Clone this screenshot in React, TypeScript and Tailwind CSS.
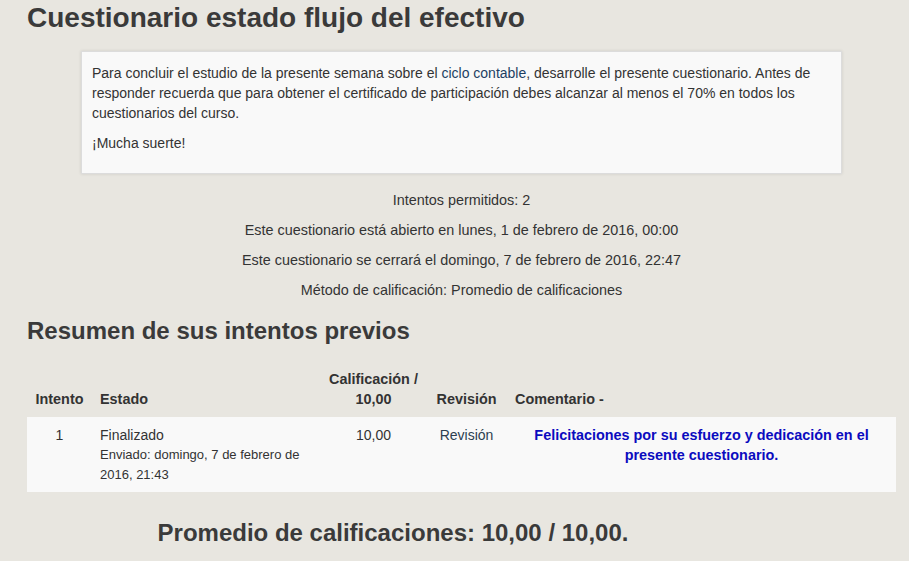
import React from 'react';

const font = { fontFamily: '"Liberation Sans", Arial, sans-serif' };

const infoLines = [
  'Intentos permitidos: 2',
  'Este cuestionario está abierto en lunes, 1 de febrero de 2016, 00:00',
  'Este cuestionario se cerrará el domingo, 7 de febrero de 2016, 22:47',
  'Método de calificación: Promedio de calificaciones',
];

export default function App() {
  return (
    <div style={font} className="min-h-[561px] w-[909px] bg-[#e8e6e0] text-[#333333] pl-[27px] pr-[13px] pt-[1px] overflow-hidden">
      <h2 className="text-[28px] font-bold leading-[32px] py-[1px] text-[#3a3a3a]">
        Cuestionario estado flujo del efectivo
      </h2>

      <div className="mx-[54px] mt-[16px] bg-[#f9f9f9] border border-[#dcdcdc] shadow-[0_0_3px_rgba(0,0,0,0.12)] px-[10px] pt-[11px] pb-[20px] text-[14px] leading-[20px]">
        <p>
          Para concluir el estudio de la presente semana sobre el{' '}
          <a className="text-[#1d3f63]">ciclo contable</a>, desarrolle el presente cuestionario. Antes de responder
          recuerda que para obtener el certificado de participación debes alcanzar al menos el 70% en todos los
          cuestionarios del curso.
        </p>
        <p className="mt-[10px]">¡Mucha suerte!</p>
      </div>

      <div className="mt-[11px] flex flex-col items-center text-[14.4px] leading-[20px]">
        {infoLines.map((line) => (
          <p key={line} className="py-[5px]">
            {line}
          </p>
        ))}
      </div>

      <h3 className="mt-[12px] text-[24px] font-bold leading-[28px] text-[#3a3a3a]">Resumen de sus intentos previos</h3>

      <table className="mt-[24px] w-[869px] table-fixed border-collapse leading-[20px]">
        <colgroup>
          <col className="w-[65px]" />
          <col className="w-[229px]" />
          <col className="w-[105px]" />
          <col className="w-[81px]" />
          <col />
        </colgroup>
        <thead>
          <tr className="font-bold align-bottom text-[14.4px]">
            <th className="px-[6px] pb-[8px] text-center">Intento</th>
            <th className="px-[8px] pb-[8px] text-left">Estado</th>
            <th className="px-[6px] pb-[8px] text-center">
              Calificación /<br />10,00
            </th>
            <th className="px-[6px] pb-[8px] text-center">Revisión</th>
            <th className="px-[8px] pb-[8px] text-left">Comentario -</th>
          </tr>
        </thead>
        <tbody>
          <tr className="bg-[#f9f9f9] align-top">
            <td className="px-[8px] pt-[8px] pb-[8px] text-center text-[14px]">1</td>
            <td className="px-[8px] pt-[8px] pb-[8px] text-[14px]">
              Finalizado
              <div className="text-[13px] leading-[19.5px]">Enviado: domingo, 7 de febrero de 2016, 21:43</div>
            </td>
            <td className="px-[8px] pt-[8px] text-center text-[14px]">10,00</td>
            <td className="px-[8px] pt-[8px] text-center text-[14px]">
              <a className="text-[#2c3e50]">Revisión</a>
            </td>
            <td className="px-[16px] pt-[8px] text-center text-[14.4px] font-bold text-[#0b0bbf]">
              Felicitaciones por su esfuerzo y dedicación en el presente cuestionario.
            </td>
          </tr>
        </tbody>
      </table>

      <h3 className="mt-[27px] w-[732px] text-center text-[24px] font-bold leading-[28px] text-[#3a3a3a]">
        Promedio de calificaciones: 10,00 / 10,00.
      </h3>
    </div>
  );
}
